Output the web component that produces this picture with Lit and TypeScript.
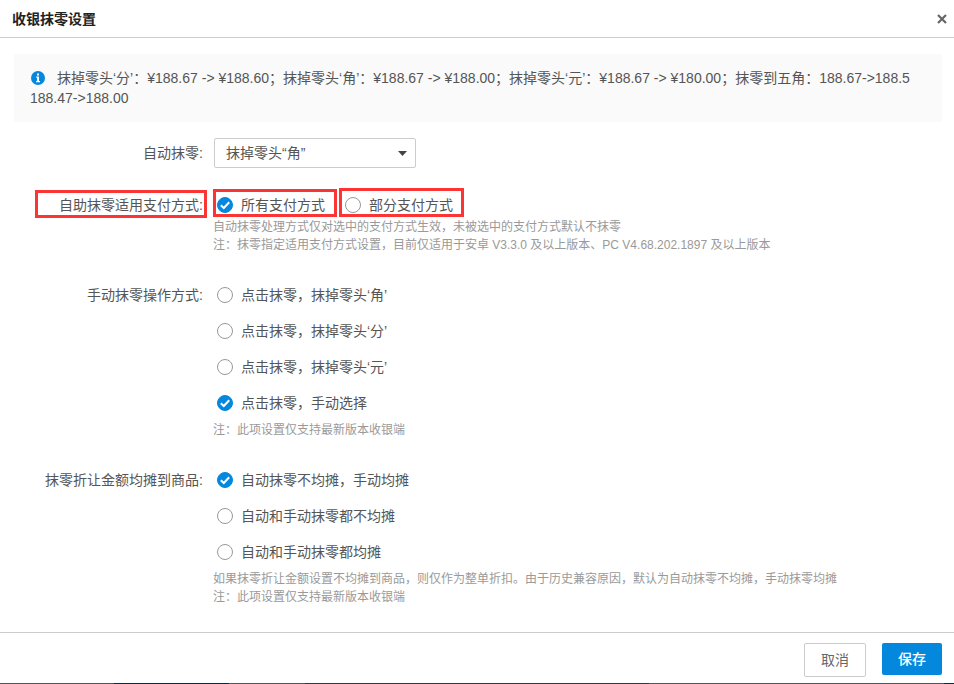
import { LitElement, html, css, nothing } from "lit";
import { customElement, property, state } from "lit/decorators.js";
import { classMap } from "lit/directives/class-map.js";

interface Option {
  value: string;
  label: string;
}

/** A set of radio buttons with round tick marks, stacked or side by side. */
@customElement("radio-set")
class RadioSet extends LitElement {
  @property() name = "";
  @property() label = "";
  @property() value = "";
  @property({ type: Boolean }) inline = false;
  @property({ type: Boolean }) marked = false;
  @property({ attribute: false }) options: Option[] = [];

  static styles = css`
    :host {
      display: block;
    }
    .set {
      display: flex;
      flex-direction: column;
      align-items: flex-start;
      gap: 16px;
      padding-left: 4px;
    }
    .set.inline {
      flex-direction: row;
      flex-wrap: wrap;
    }
    .option {
      position: relative;
      display: flex;
      align-items: center;
      gap: 8px;
      height: 20px;
      line-height: 20px;
      cursor: pointer;
    }
    .inline .option {
      min-width: 112px;
    }
    .mark {
      display: grid;
      width: 16px;
      height: 16px;
    }
    input {
      grid-area: 1 / 1;
      appearance: none;
      box-sizing: border-box;
      width: 16px;
      height: 16px;
      margin: 0;
      border: 1px solid #999;
      border-radius: 50%;
      background: #fff;
      cursor: pointer;
    }
    input:checked {
      border-color: #0388de;
      background: #0388de;
    }
    svg {
      grid-area: 1 / 1;
      z-index: 1;
      pointer-events: none;
      visibility: hidden;
    }
    input:checked + svg {
      visibility: visible;
    }
    .frame {
      position: absolute;
      inset: -6px -8px -2px -4px;
      border: 3px solid #fb3434;
      pointer-events: none;
    }
    .option + .option .frame {
      inset: -7px -7px -2px -6px;
    }
  `;

  render() {
    return html`
      <div
        class=${classMap({ set: true, inline: this.inline })}
        role="radiogroup"
        aria-label=${this.label}
      >
        ${this.options.map(
          (o) => html`
            <label class="option">
              <span class="mark">
                <input
                  type="radio"
                  name=${this.name}
                  value=${o.value}
                  .checked=${o.value === this.value}
                  @change=${() => (this.value = o.value)}
                />
                <svg width="16" height="16" viewBox="0 0 16 16" aria-hidden="true">
                  <path d="M3.8 8.2 6.8 11 12.2 5.3" fill="none" stroke="#fff" stroke-width="2" />
                </svg>
              </span>
              <span>${o.label}</span>
              ${this.marked ? html`<span class="frame"></span>` : nothing}
            </label>
          `
        )}
      </div>
    `;
  }
}

@customElement("app-root")
class AppRoot extends LitElement {
  @state() private auto = "jiao";

  private autoOptions: Option[] = [
    { value: "fen", label: "抹掉零头“分”" },
    { value: "jiao", label: "抹掉零头“角”" },
    { value: "yuan", label: "抹掉零头“元”" },
  ];

  private payOptions: Option[] = [
    { value: "all", label: "所有支付方式" },
    { value: "part", label: "部分支付方式" },
  ];

  private manualOptions: Option[] = [
    { value: "jiao", label: "点击抹零，抹掉零头‘角’" },
    { value: "fen", label: "点击抹零，抹掉零头‘分’" },
    { value: "yuan", label: "点击抹零，抹掉零头‘元’" },
    { value: "choose", label: "点击抹零，手动选择" },
  ];

  private shareOptions: Option[] = [
    { value: "manual", label: "自动抹零不均摊，手动均摊" },
    { value: "none", label: "自动和手动抹零都不均摊" },
    { value: "both", label: "自动和手动抹零都均摊" },
  ];

  static styles = css`
    :host {
      display: flex;
      flex-direction: column;
      min-height: 100vh;
      background: #fff;
      color: #555;
      font: 14px/20px "Liberation Sans", "Noto Sans CJK SC", sans-serif;
    }
    header {
      display: flex;
      align-items: center;
      justify-content: space-between;
      height: 37px;
      padding: 0 6px 0 12px;
      border-bottom: 1px solid #ccc;
    }
    h1 {
      margin: 0;
      font-size: 14px;
      line-height: 20px;
      font-weight: bold;
      color: #222;
    }
    button {
      font: inherit;
      cursor: pointer;
    }
    .close {
      display: grid;
      place-items: center;
      width: 12px;
      height: 12px;
      padding: 0;
      border: 0;
      background: none;
    }
    main {
      flex: 1;
      padding: 16px 12px 24px 14px;
    }
    .notice {
      margin: 0 0 16px;
      padding: 14px 16px;
      background: #fafafa;
    }
    .notice svg {
      margin: 0 12px 0 1px;
      vertical-align: -2px;
    }
    .field {
      display: grid;
      grid-template-columns: 189px 1fr;
      column-gap: 10px;
      margin-top: 31px;
    }
    .field.first {
      margin-top: 0;
      align-items: center;
    }
    .field.second {
      margin-top: 27px;
    }
    .name {
      position: relative;
      height: 20px;
      text-align: right;
    }
    .name .frame {
      position: absolute;
      inset: -5px -4px -3px 21px;
      border: 3px solid #fb3434;
    }
    .hint {
      margin: 8px 0 0;
      font-size: 12px;
      line-height: 18px;
      color: #999;
    }
    .second .hint {
      margin-top: 3px;
    }
    .picker {
      display: grid;
      align-items: center;
      width: 202px;
      margin-left: 1px;
    }
    select {
      grid-area: 1 / 1;
      appearance: none;
      box-sizing: border-box;
      width: 100%;
      height: 30px;
      padding: 0 28px 0 11px;
      border: 1px solid #ccc;
      border-radius: 2px;
      background: #fff;
      color: inherit;
      font: inherit;
    }
    .picker svg {
      grid-area: 1 / 1;
      justify-self: end;
      margin-right: 9px;
      z-index: 1;
      pointer-events: none;
    }
    footer {
      display: flex;
      align-items: flex-start;
      justify-content: flex-end;
      gap: 16px;
      padding: 10px 12px 6px;
      border-top: 1px solid #ccc;
    }
    .cancel {
      box-sizing: border-box;
      width: 62px;
      height: 34px;
      padding: 0;
      border: 1px solid #ccc;
      border-radius: 2px;
      background: #fff;
      color: #666;
    }
    .save {
      width: 60px;
      height: 32px;
      padding: 0;
      border: 0;
      border-radius: 2px;
      background: #0388de;
      color: #fff;
      font-weight: 500;
    }
    .backdrop {
      height: 1px;
      background: linear-gradient(
        90deg,
        #555 12%,
        #0b2a42 12% 24%,
        #555 24% 32%,
        #37343a 32% 68%,
        #555 68% 99%,
        #0b2a42 99%
      );
    }
  `;

  render() {
    return html`
      <header>
        <h1>收银抹零设置</h1>
        <button class="close" type="button" aria-label="关闭">
          <svg width="10" height="10" viewBox="0 0 10 10" aria-hidden="true">
            <path d="M1 1 9 9M9 1 1 9" fill="none" stroke="#666" stroke-width="2.2" />
          </svg>
        </button>
      </header>
      <main>
        <p class="notice">
          <svg width="14" height="14" viewBox="0 0 14 14" aria-hidden="true">
            <circle cx="7" cy="7" r="7" fill="#0388de" />
            <path d="M6 2.6h2v2H6zM5.2 5.6H8v4.4h1v1.2H5V10h1V6.8h-.8z" fill="#fff" />
          </svg>抹掉零头‘分’：¥188.67 -> ¥188.60；抹掉零头‘角’：¥188.67 -> ¥188.00；抹掉零头‘元’：¥188.67 -> ¥180.00；抹零到五角：188.67->188.5 188.47->188.00
        </p>
        <div class="field first">
          <label class="name" for="auto">自动抹零:</label>
          <div class="picker">
            <select
              id="auto"
              @change=${(e: Event) => (this.auto = (e.target as HTMLSelectElement).value)}
            >
              ${this.autoOptions.map(
                (o) => html`<option value=${o.value} ?selected=${o.value === this.auto}>${o.label}</option>`
              )}
            </select>
            <svg width="9" height="5" viewBox="0 0 9 5" aria-hidden="true">
              <path d="M0 0h9L4.5 5z" fill="#444" />
            </svg>
          </div>
        </div>
        <div class="field second">
          <div class="name">自助抹零适用支付方式:<span class="frame"></span></div>
          <div>
            <radio-set name="pay" label="自助抹零适用支付方式" value="all" inline marked .options=${this.payOptions}></radio-set>
            <p class="hint">
              自动抹零处理方式仅对选中的支付方式生效，未被选中的支付方式默认不抹零<br />
              注：抹零指定适用支付方式设置，目前仅适用于安卓 V3.3.0 及以上版本、PC V4.68.202.1897 及以上版本
            </p>
          </div>
        </div>
        <div class="field">
          <div class="name">手动抹零操作方式:</div>
          <div>
            <radio-set name="manual" label="手动抹零操作方式" value="choose" .options=${this.manualOptions}></radio-set>
            <p class="hint">注：此项设置仅支持最新版本收银端</p>
          </div>
        </div>
        <div class="field">
          <div class="name">抹零折让金额均摊到商品:</div>
          <div>
            <radio-set name="share" label="抹零折让金额均摊到商品" value="manual" .options=${this.shareOptions}></radio-set>
            <p class="hint">
              如果抹零折让金额设置不均摊到商品，则仅作为整单折扣。由于历史兼容原因，默认为自动抹零不均摊，手动抹零均摊<br />
              注：此项设置仅支持最新版本收银端
            </p>
          </div>
        </div>
      </main>
      <footer>
        <button class="cancel" type="button">取消</button>
        <button class="save" type="button">保存</button>
      </footer>
      <div class="backdrop"></div>
    `;
  }
}
